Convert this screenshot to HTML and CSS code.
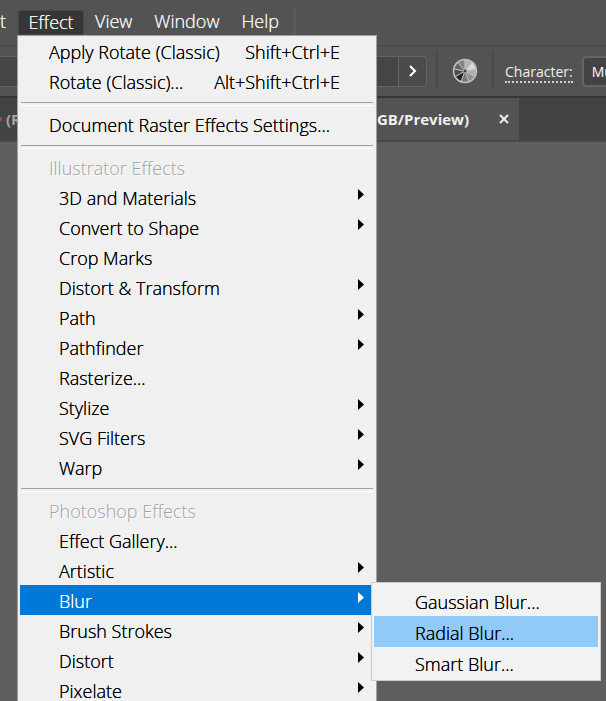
FILE: index.html
```
<!DOCTYPE html>
<html lang="en">
<head>
<meta charset="utf-8">
<title>Effect menu</title>
<link rel="stylesheet" href="styles.css">
</head>
<body>
<svg class="defs" aria-hidden="true">
  <symbol id="arrow" viewBox="0 0 6 11"><path d="M0 0L6 5.5L0 11Z" fill="currentColor"/></symbol>
</svg>
<div class="app">
  <nav class="menubar">
    <button class="menu-title clipped">t</button>
    <button class="menu-title open">Effect</button>
    <button class="menu-title">View</button>
    <button class="menu-title">Window</button>
    <button class="menu-title">Help</button>
    <span class="menubar-rule"></span>
  </nav>

  <div class="controls">
    <div class="combo">
      <input class="combo-field" type="text" aria-label="Style">
      <button class="combo-button" aria-label="More">
        <svg width="8" height="12" viewBox="0 0 8 12"><path d="M1 1L6 6L1 11" fill="none" stroke="#fff" stroke-width="2"/></svg>
      </button>
    </div>
    <span class="rule"></span>
    <button class="wheel" aria-label="Recolor artwork">
      <svg width="26" height="26" viewBox="0 0 26 26">
        <circle cx="13" cy="13" r="11" fill="#858585"/>
        <path d="M13 13V2A11 11 0 0 1 20.100 4.600Z" fill="#b5b5b5"/>
        <path d="M13 13L20.100 4.600A11 11 0 0 1 23.800 11.100Z" fill="#dadada"/>
        <path d="M13 13L23.800 11.100A11 11 0 0 1 22.500 18.500Z" fill="#b0b0b0"/>
        <path d="M13 13L22.500 18.500A11 11 0 0 1 16.800 23.300Z" fill="#8f8f8f"/>
        <path d="M13 13L16.800 23.300A11 11 0 0 1 9.200 23.300Z" fill="#777"/>
        <path d="M13 13L9.200 23.300A11 11 0 0 1 3.500 18.500Z" fill="#262626"/>
        <path d="M13 13L3.500 18.500A11 11 0 0 1 2.200 11.100Z" fill="#4b4b4b"/>
        <path d="M13 13L2.200 11.100A11 11 0 0 1 5.900 4.600Z" fill="#666"/>
        <path d="M13 2V13M20.100 4.600L13 13M23.800 11.100L13 13M22.500 18.500L13 13M16.800 23.300L13 13M9.200 23.300L13 13M3.500 18.500L13 13M2.200 11.100L13 13M5.900 4.600L13 13" stroke="#c4c4c4" stroke-width="1"/>
        <circle cx="13" cy="13" r="11.500" fill="none" stroke="#c4c4c4" stroke-width="1.500"/>
        <circle cx="13" cy="13" r="2" fill="#484848" stroke="#aaa"/>
      </svg>
    </button>
    <span class="rule"></span>
    <label class="character" for="font">Character:</label>
    <input class="font-field" id="font" type="text" value="Mu">
  </div>

  <div class="tabs">
    <div class="tab"><span class="tab-mark"></span>(R</div>
    <div class="tab active">(RGB/Preview)
      <button class="close" aria-label="Close">
        <svg width="10" height="10" viewBox="0 0 10 10"><path d="M1 1L9 9M9 1L1 9" stroke="#f0f0f0" stroke-width="2"/></svg>
      </button>
    </div>
  </div>

  <ul class="popup">
    <li class="item top">Apply Rotate (Classic)<kbd>Shift+Ctrl+E</kbd></li>
    <li class="item top">Rotate (Classic)...<kbd>Alt+Shift+Ctrl+E</kbd></li>
    <li class="divider"></li>
    <li class="item top">Document Raster Effects Settings...</li>
    <li class="divider"></li>
    <li class="item heading">Illustrator Effects</li>
    <li class="item">3D and Materials<svg class="arrow"><use href="#arrow"/></svg></li>
    <li class="item">Convert to Shape<svg class="arrow"><use href="#arrow"/></svg></li>
    <li class="item">Crop Marks</li>
    <li class="item">Distort &amp; Transform<svg class="arrow"><use href="#arrow"/></svg></li>
    <li class="item">Path<svg class="arrow"><use href="#arrow"/></svg></li>
    <li class="item">Pathfinder<svg class="arrow"><use href="#arrow"/></svg></li>
    <li class="item">Rasterize...</li>
    <li class="item">Stylize<svg class="arrow"><use href="#arrow"/></svg></li>
    <li class="item">SVG Filters<svg class="arrow"><use href="#arrow"/></svg></li>
    <li class="item">Warp<svg class="arrow"><use href="#arrow"/></svg></li>
    <li class="divider"></li>
    <li class="item heading">Photoshop Effects</li>
    <li class="item">Effect Gallery...</li>
    <li class="item">Artistic<svg class="arrow"><use href="#arrow"/></svg></li>
    <li class="item selected">Blur<svg class="arrow"><use href="#arrow"/></svg>
      <ul class="submenu">
        <li class="subitem">Gaussian Blur...</li>
        <li class="subitem hover">Radial Blur...</li>
        <li class="subitem">Smart Blur...</li>
      </ul>
    </li>
    <li class="item">Brush Strokes<svg class="arrow"><use href="#arrow"/></svg></li>
    <li class="item">Distort<svg class="arrow"><use href="#arrow"/></svg></li>
    <li class="item">Pixelate<svg class="arrow"><use href="#arrow"/></svg></li>
  </ul>
</div>
</body>
</html>
```
FILE: styles.css
```
* { box-sizing: border-box; }

body {
  margin: 0;
  background: #5f5f5f;
  color: #000;
  font: 300 18px/24px "Open Sans", "Noto Sans", sans-serif;
}

ul { margin: 0; padding: 0; list-style: none; }
button, input { font: inherit; margin: 0; padding: 0; }
.defs { display: none; }

.app {
  position: relative;
  height: 100vh;
  overflow: hidden;
}

/* Menu bar */
.menubar {
  display: flex;
  align-items: flex-end;
  height: 45px;
  padding-bottom: 10px;
  background: #535353;
}
.menu-title {
  height: 25px;
  padding: 0 11px 3px;
  border: 0;
  background: none;
  color: #f0f0f0;
  font-size: 18px;
  line-height: 22px;
  text-shadow: 0 0 0 currentColor;
}
.menu-title.clipped { width: 18px; padding: 0 0 3px; text-align: left; }
.menu-title.open {
  width: 66px;
  padding: 0 0 2px;
  border: 1px solid #484848;
  border-radius: 3px 3px 0 0;
  background: #363636;
}
.menubar-rule { width: 3px; height: 28px; margin-left: 3px; background: #5b5b5b; }

/* Control bar */
.controls {
  display: flex;
  align-items: center;
  height: 53px;
  border-top: 1px solid #434343;
  border-bottom: 2px solid #363636;
  background: #535353;
  color: #f0f0f0;
  font-size: 14px;
  font-weight: 400;
  white-space: nowrap;
}
.combo { display: flex; flex: none; width: 427px; height: 31px; }
.combo-field {
  flex: 1;
  min-width: 0;
  border: 1px solid #646464;
  border-left: 0;
  background: #454545;
}
.combo-button {
  display: flex;
  align-items: center;
  justify-content: center;
  width: 28px;
  border: 1px solid #646464;
  border-left: 0;
  border-radius: 0 3px 3px 0;
  background: #4b4b4b;
}
.rule { flex: none; width: 2px; height: 38px; margin: 0 9px; background: #4a4a4a; }
.wheel { flex: none; height: 26px; margin: 0 5px; border: 0; background: none; }
.wheel svg { display: block; }
.character {
  margin: 3px 9px 0 2px;
  border-bottom: 2px dotted #d0d0d0;
  line-height: 18px;
}
.font-field {
  flex: 1;
  min-width: 0;
  height: 31px;
  padding-left: 8px;
  border: 2px solid #646464;
  border-right: 0;
  border-radius: 4px 0 0 4px;
  background: #434343;
  color: #fff;
}

/* Document tabs */
.tabs {
  display: flex;
  height: 44px;
  border-bottom: 2px solid #484848;
  background: #434343;
  font-size: 15px;
  font-weight: 700;
}
.tab {
  display: flex;
  align-items: center;
  width: 100px;
  overflow: hidden;
  color: #a5a5a5;
  white-space: nowrap;
}
.tab-mark { flex: none; width: 2px; height: 4px; margin-right: 4px; background: #8a5548; }
.tab.active {
  justify-content: flex-end;
  width: 419px;
  padding-right: 10px;
  background: #535353;
  color: #f0f0f0;
}
.close {
  display: flex;
  align-items: center;
  margin-left: 30px;
  border: 0;
  background: none;
}

/* Drop-down menu */
.popup {
  position: absolute;
  top: 35px;
  left: 17px;
  width: 360px;
  padding: 0 2px;
  border: 1px solid #a0a0a0;
  background: #f0f0f0;
}
.item {
  display: flex;
  align-items: center;
  position: relative;
  height: 30px;
  padding: 2px 10px 0 39px;
  line-height: 26px;
  text-shadow: 0 0 0 currentColor;
  white-space: nowrap;
}
.item.top, .item.heading { padding-left: 29px; }
.item.heading { color: #a0a0a0; text-shadow: 1px 1px #fff; }
.item.selected { margin-right: 2px; padding-right: 8px; background: #0078d7; color: #fff; }
kbd { margin: 0 24px 0 auto; font: inherit; }
.arrow { width: 6px; height: 11px; margin: -7px 0 0 auto; }
.divider {
  height: 13px;
  margin: 0 1px;
  padding-top: 6px;
}
.divider::before {
  content: "";
  display: block;
  height: 2px;
  border-top: 1px solid #a0a0a0;
  border-bottom: 1px solid #fff;
}

.submenu {
  position: absolute;
  top: -3px;
  left: calc(100% - 1px);
  z-index: 1;
  width: 230px;
  padding: 2px;
  border: 1px solid #ccc;
  background: #f2f2f2;
  color: #000;
}
.subitem { height: 31px; padding: 4px 0 0 41px; line-height: 27px; text-shadow: 0 0 0 currentColor; }
.subitem.hover { background: #91c9f7; }
```
